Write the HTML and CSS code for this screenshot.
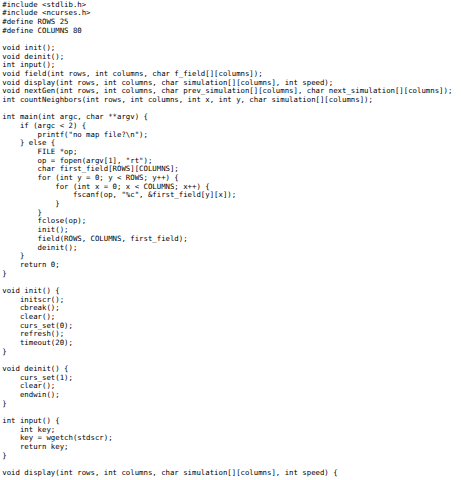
FILE: index.html
```html
<!DOCTYPE html>
<html>
<head>
<meta charset="utf-8">
<link rel="stylesheet" href="styles.css">
</head>
<body>
<pre class="code">#include &lt;stdlib.h&gt;
#include &lt;ncurses.h&gt;
#define ROWS 25
#define COLUMNS 80

void init();
void deinit();
int input();
void field(int rows, int columns, char f_field[][columns]);
void display(int rows, int columns, char simulation[][columns], int speed);
void nextGen(int rows, int columns, char prev_simulation[][columns], char next_simulation[][columns]);
int countNeighbors(int rows, int columns, int x, int y, char simulation[][columns]);

int main(int argc, char **argv) {
    if (argc &lt; 2) {
        printf("no map file?\n");
    } else {
        FILE *op;
        op = fopen(argv[1], "rt");
        char first_field[ROWS][COLUMNS];
        for (int y = 0; y &lt; ROWS; y++) {
            for (int x = 0; x &lt; COLUMNS; x++) {
                fscanf(op, "%c", &amp;first_field[y][x]);
            }
        }
        fclose(op);
        init();
        field(ROWS, COLUMNS, first_field);
        deinit();
    }
    return 0;
}

void init() {
    initscr();
    cbreak();
    clear();
    curs_set(0);
    refresh();
    timeout(20);
}

void deinit() {
    curs_set(1);
    clear();
    endwin();
}

int input() {
    int key;
    key = wgetch(stdscr);
    return key;
}

void display(int rows, int columns, char simulation[][columns], int speed) {</pre>
</body>
</html>
```

FILE: styles.css
```css
html, body {
  margin: 0;
  padding: 0;
  background: #ffffff;
}
.code {
  margin: 0;
  padding: 0.7px 0 0 2.3px;
  font-family: "DejaVu Sans Mono", monospace;
  font-size: 7.33px;
  line-height: 8.67px;
  color: #000000;
  white-space: pre;
}
```
